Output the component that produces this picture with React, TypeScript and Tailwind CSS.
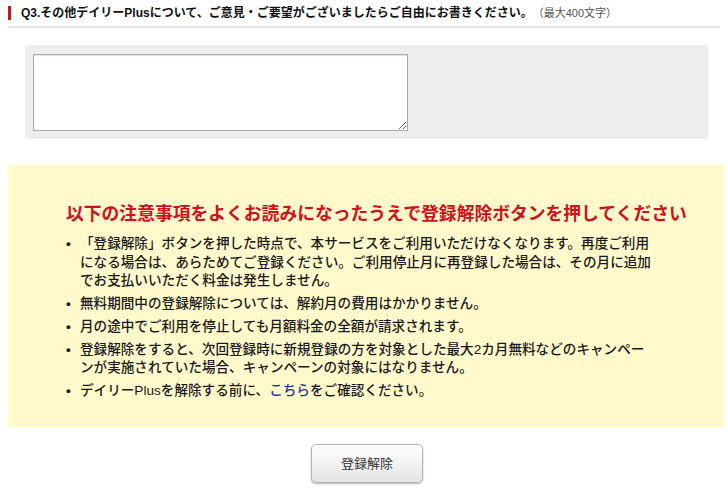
import React from "react";

const items: React.ReactNode[] = [
  <>
    「登録解除」ボタンを押した時点で、本サービスをご利用いただけなくなります。再度ご利用
    <br />
    になる場合は、あらためてご登録ください。ご利用停止月に再登録した場合は、その月に追加
    <br />
    でお支払いいただく料金は発生しません。
  </>,
  <>無料期間中の登録解除については、解約月の費用はかかりません。</>,
  <>月の途中でご利用を停止しても月額料金の全額が請求されます。</>,
  <>
    登録解除をすると、次回登録時に新規登録の方を対象とした最大2カ月無料などのキャンペー
    <br />
    ンが実施されていた場合、キャンペーンの対象にはなりません。
  </>,
  <>
    デイリーPlusを解除する前に、<span className="text-[#1f3a9a]">こちら</span>をご確認ください。
  </>,
];

export default function App() {
  return (
    <div className="w-[728px] h-[492px] bg-white overflow-hidden font-['Liberation_Sans','Noto_Sans_CJK_JP',sans-serif] text-[#1a1a1a]">
      {/* Header */}
      <div className="flex items-center pl-[8px] pt-[6px] h-[20px]">
        <div className="w-[3px] h-[14px] bg-[#c8161d]" />
        <div className="ml-[10px] flex items-baseline whitespace-nowrap">
          <span className="text-[12px] font-bold text-[#111] leading-[14px]">
            Q3.その他デイリーPlusについて、ご意見・ご要望がございましたらご自由にお書きください。
          </span>
          <span className="text-[11px] text-[#555] leading-[14px]">（最大400文字）</span>
        </div>
      </div>
      <div className="ml-[8px] mt-[6px] w-[712px] h-[2px] bg-[#e6e6e6]" />

      {/* Gray textarea box */}
      <div className="ml-[25px] mt-[17px] w-[683px] h-[94px] bg-[#eeecec] pt-[9px] pl-[8px]">
        <textarea className="block w-[375px] h-[77px] bg-white border border-[#a9a9a9] shadow-[inset_0_1px_1px_rgba(0,0,0,0.12)] outline-none" />
      </div>

      {/* Yellow notice */}
      <div className="ml-[8px] mt-[26px] w-[716px] h-[262px] bg-[#fff9cc] pl-[58px] pt-[37px]">
        <h2 className="text-[17.8px] font-bold leading-[24px] text-[#d0101b] whitespace-nowrap">
          以下の注意事項をよくお読みになったうえで登録解除ボタンを押してください
        </h2>
        <ul className="mt-[9px] flex flex-col gap-[4.4px]">
          {items.map((c, i) => (
            <li key={i} className="flex text-[13.6px] font-medium leading-[18.5px] whitespace-nowrap">
              <span className="w-[14px] shrink-0 font-bold">•</span>
              <span>{c}</span>
            </li>
          ))}
        </ul>
      </div>

      {/* Button */}
      <div className="mt-[17px] pl-[311px]">
        <button className="w-[112px] h-[39px] rounded-[5px] border border-[#b3b3b3] bg-gradient-to-b from-white to-[#e4e4e4] shadow-[0_1px_2px_rgba(0,0,0,0.3)] text-[13px] text-[#333]">
          登録解除
        </button>
      </div>
    </div>
  );
}
